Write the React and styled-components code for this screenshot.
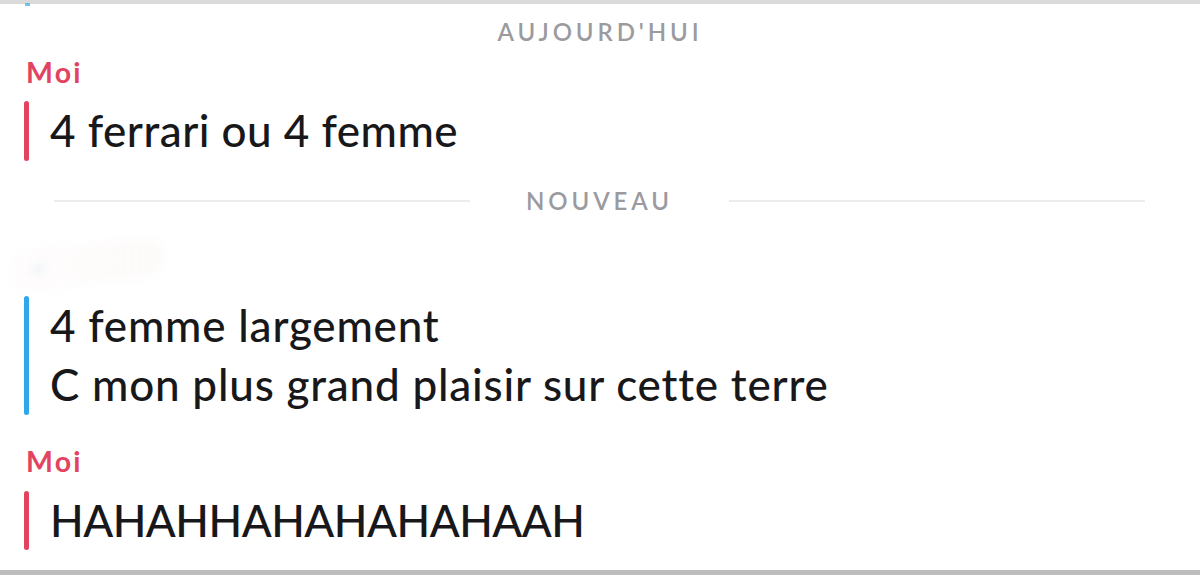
import React from "react";
import styled, { createGlobalStyle } from "styled-components";

const GlobalStyle = createGlobalStyle`
	html, body {
		margin: 0;
		padding: 0;
		background: #ffffff;
	}
	body {
		font-family: "Lato", "Noto Sans", sans-serif;
		-webkit-font-smoothing: antialiased;
	}
`;

const Screen = styled.div`
	width: 1200px;
	height: 575px;
	display: flex;
	flex-direction: column;
	background: #ffffff;
	overflow: hidden;
`;

const Band = styled.div`
	flex: 0 0 auto;
	height: ${({ h }) => h}px;
	background: ${({ color }) => color};
	display: flex;
	align-items: flex-end;
	padding-left: 25px;
`;

const BandTick = styled.span`
	width: 5px;
	height: 3px;
	margin-bottom: -2px;
	background: #38a9e6;
	opacity: 0.7;
`;

const Feed = styled.div`
	flex: 1 1 auto;
	display: flex;
	flex-direction: column;
	padding: 0 24px;
`;

const DayLabel = styled.div`
	margin-top: ${({ mt }) => mt}px;
	height: 30px;
	display: flex;
	align-items: center;
	justify-content: center;
	gap: 56px;
	font-size: 24px;
	font-weight: 600;
	letter-spacing: 3.9px;
	color: #9b9b9f;
	white-space: nowrap;
`;

const Rule = styled.span`
	flex: 1 1 auto;
	height: 2px;
	background: #ececec;
	margin-left: ${({ side }) => (side === "left" ? "30px" : "0")};
	margin-right: ${({ side }) => (side === "right" ? "31px" : "0")};
`;

const Sender = styled.div`
	margin-top: ${({ mt }) => mt}px;
	height: 34px;
	display: flex;
	align-items: center;
	padding-left: 2px;
	font-size: 28.5px;
	font-weight: 700;
	letter-spacing: 2.2px;
	color: #e2445f;
`;

const Message = styled.div`
	margin-top: ${({ mt }) => mt}px;
	display: flex;
	gap: 21px;
`;

const Bar = styled.span`
	flex: 0 0 5px;
	border-radius: 3px;
	background: ${({ color }) => color};
`;

const Lines = styled.div`
	display: flex;
	flex-direction: column;
	font-size: 44px;
	font-weight: 500;
	line-height: 59.5px;
	letter-spacing: ${({ spacing }) => spacing}px;
	color: #18181a;
	white-space: nowrap;
`;

const Redacted = styled.div`
	margin-top: ${({ mt }) => mt}px;
	margin-left: -14px;
	width: 130px;
	height: 40px;
	display: flex;
	align-items: center;
	padding-left: 24px;
	background: linear-gradient(90deg, rgba(245, 215, 215, 0.06), rgba(245, 220, 220, 0.14));
	border-radius: 20px;
	transform: skewY(-6deg);
	filter: blur(5px);
`;

const RedactedDash = styled.span`
	width: 9px;
	height: 2px;
	background: #3aa9e6;
	opacity: 0.5;
`;

export default function App() {
	return (
		<Screen>
			<GlobalStyle />
			<Band h={4} color="#dadada">
				<BandTick />
			</Band>
			<Feed>
				<DayLabel mt={12}>AUJOURD'HUI</DayLabel>
				<Sender mt={9}>Moi</Sender>
				<Message mt={12}>
					<Bar color="#e2445f" />
					<Lines spacing={0.5}>
						<span>4 ferrari ou 4 femme</span>
					</Lines>
				</Message>
				<DayLabel mt={25}>
					<Rule side="left" />
					NOUVEAU
					<Rule side="right" />
				</DayLabel>
				<Redacted mt={28}>
					<RedactedDash />
				</Redacted>
				<Message mt={12}>
					<Bar color="#2fa8ea" />
					<Lines spacing={0.8}>
						<span>4 femme largement</span>
						<span>C mon plus grand plaisir sur cette terre</span>
					</Lines>
				</Message>
				<Sender mt={29}>Moi</Sender>
				<Message mt={13}>
					<Bar color="#e2445f" />
					<Lines spacing={-0.5}>
						<span>HAHAHHAHAHAHAHAAH</span>
					</Lines>
				</Message>
			</Feed>
			<Band h={5} color="#bdbdbd" />
		</Screen>
	);
}
